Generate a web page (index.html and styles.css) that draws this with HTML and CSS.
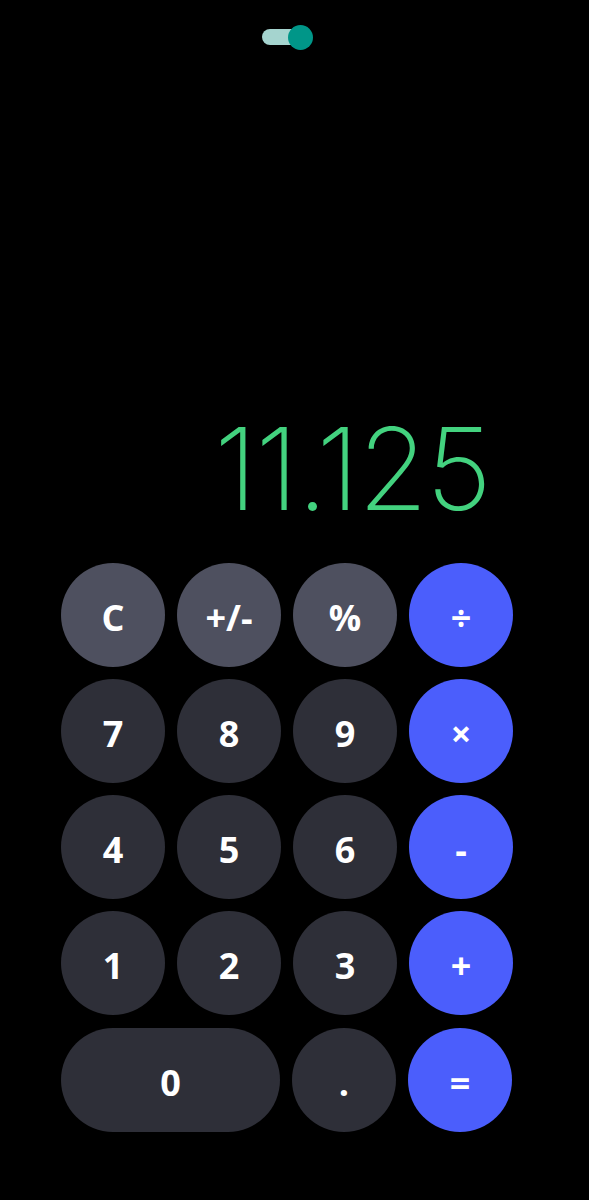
FILE: index.html
```html
<!DOCTYPE html>
<html lang="en">
<head>
<meta charset="utf-8">
<title>Calculator</title>
<link rel="stylesheet" href="styles.css">
</head>
<body>
<main class="calc">
  <div class="toggle-row">
    <div class="toggle"><span class="track"></span><span class="knob"></span></div>
  </div>
  <div class="display">11.125</div>
  <div class="keys">
    <button class="key fn">C</button>
    <button class="key fn">+/-</button>
    <button class="key fn">%</button>
    <button class="key op">÷</button>
    <button class="key">7</button>
    <button class="key">8</button>
    <button class="key">9</button>
    <button class="key op">×</button>
    <button class="key">4</button>
    <button class="key">5</button>
    <button class="key">6</button>
    <button class="key op">-</button>
    <button class="key">1</button>
    <button class="key">2</button>
    <button class="key">3</button>
    <button class="key op">+</button>
  </div>
  <div class="last-row">
    <button class="key zero">0</button>
    <button class="key">.</button>
    <button class="key op">=</button>
  </div>
</main>
</body>
</html>
```
FILE: styles.css
```css
html, body {
  margin: 0;
  padding: 0;
  background: #000;
}
body {
  font-family: "Open Sans", "DejaVu Sans", sans-serif;
}
.calc {
  width: 467px;
  margin: 0 auto;
  padding-top: 25px;
}
.toggle-row {
  display: flex;
  justify-content: flex-start;
  padding-left: 201px;
}
.toggle {
  position: relative;
  width: 51px;
  height: 24px;
}
.track {
  position: absolute;
  left: 0;
  top: 4px;
  width: 40px;
  height: 16px;
  border-radius: 8px;
  background: #a5d4cf;
}
.knob {
  position: absolute;
  right: 0;
  top: 0;
  width: 25px;
  height: 25px;
  border-radius: 50%;
  background: #009688;
}
.display {
  margin-top: 352px;
  height: 136px;
  color: #43d27f;
  font-family: "Inter", "Open Sans", sans-serif;
  font-weight: 200;
  font-size: 114px;
  line-height: 136px;
  text-align: right;
  padding-right: 38px;
  letter-spacing: -2px;
  font-variant-numeric: proportional-nums;
}
.keys {
  margin-top: 26px;
  display: grid;
  grid-template-columns: repeat(4, 104px);
  gap: 12px;
}
.last-row {
  margin-top: 13px;
  display: flex;
  gap: 12px;
}
.key {
  width: 104px;
  height: 104px;
  border: none;
  border-radius: 52px;
  background: #2e2f38;
  color: #fff;
  font-family: "Open Sans", "DejaVu Sans", sans-serif;
  font-weight: 700;
  font-size: 36px;
  padding: 0;
  padding-top: 4px;
}
.key.fn {
  background: #4e505f;
}
.key.op {
  background: #4b5efc;
}
.key.zero {
  width: 219px;
}
```
